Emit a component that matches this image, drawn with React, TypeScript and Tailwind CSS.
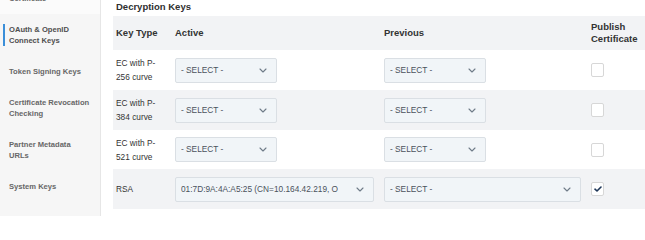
import React from "react";

const font = { fontFamily: '"Liberation Sans", Arial, sans-serif' };

function Chevron() {
  return (
    <svg width="8" height="5" viewBox="0 0 8 5" className="shrink-0">
      <path d="M1 1 L4 4 L7 1" fill="none" stroke="#6f7b88" strokeWidth="1.1" strokeLinecap="round" strokeLinejoin="round" />
    </svg>
  );
}

function Select({ text, full }: { text: string; full?: boolean }) {
  return (
    <div
      className={`${full ? "w-full" : "w-[102px]"} h-[25px] flex items-center pl-[5px] pr-[9px] bg-[#f1f5f8] border border-[#dadfe4] rounded-[2px] text-[8.3px] text-[#4a525c]`}
    >
      <span className="flex-1 min-w-0 whitespace-nowrap overflow-hidden mr-[18px]">{text}</span>
      <Chevron />
    </div>
  );
}

function Checkbox({ checked }: { checked?: boolean }) {
  return (
    <div className="w-[13px] h-[14px] border border-[#d7d7d7] rounded-[2px] bg-white flex items-center justify-center">
      {checked && (
        <svg width="8" height="6" viewBox="0 0 8 6">
          <path d="M1 3.2 L3 5 L7 1" fill="none" stroke="#1d3557" strokeWidth="1.6" strokeLinecap="round" strokeLinejoin="round" />
        </svg>
      )}
    </div>
  );
}

const rows = [
  { type: "EC with P-256 curve", active: "- SELECT -", prev: "- SELECT -", full: false, checked: false },
  { type: "EC with P-384 curve", active: "- SELECT -", prev: "- SELECT -", full: false, checked: false },
  { type: "EC with P-521 curve", active: "- SELECT -", prev: "- SELECT -", full: false, checked: false },
  { type: "RSA", active: "01:7D:9A:4A:A5:25 (CN=10.164.42.219, O=Ping Identity)", prev: "- SELECT -", full: true, checked: true },
];

export default function App() {
  return (
    <div style={font} className="w-[645px] h-[216px] overflow-hidden flex bg-white">
      <aside className="w-[101px] shrink-0 bg-[#f6f6f6] border-r border-[#e6e6e6] flex flex-col text-[7.6px] font-bold text-[#676767] leading-[11px]">
        <div className="h-[14px] bg-[#fbfbfb] flex flex-col justify-end pb-[10px] pl-[9px] overflow-hidden">
          <span className="whitespace-nowrap">Certificate</span>
        </div>
        <div className="py-[10px] pl-[3px] pr-[6px]">
          <div className="border-l-[2px] border-[#3b8fd9] pl-[4px] text-[#4f4f4f]">
            OAuth &amp; OpenID
            <br />
            Connect Keys
          </div>
        </div>
        <div className="py-[10px] pl-[9px] pr-[6px]">Token Signing Keys</div>
        <div className="py-[10px] pl-[9px] pr-[6px]">
          Certificate Revocation
          <br />
          Checking
        </div>
        <div className="py-[10px] pl-[9px] pr-[6px]">
          Partner Metadata
          <br />
          URLs
        </div>
        <div className="py-[10px] pl-[9px] pr-[6px]">System Keys</div>
      </aside>
      <main className="flex-1 pl-[12px] flex flex-col">
        <div className="h-[16px] flex items-center pl-[3px] pb-[3px] text-[9.5px] font-bold text-[#2f2f2f] leading-none">
          Decryption Keys
        </div>
        <div className="grid grid-cols-[62px_209px_207px_1fr] text-[#333]">
          <div className="h-[34px] bg-[#f2f3f5] flex items-center pl-[3px] text-[9.5px] font-bold">Key Type</div>
          <div className="h-[34px] bg-[#f2f3f5] flex items-center text-[9.5px] font-bold">Active</div>
          <div className="h-[34px] bg-[#f2f3f5] flex items-center text-[9.5px] font-bold">Previous</div>
          <div className="h-[34px] bg-[#f2f3f5] flex items-center text-[9.5px] font-bold leading-[12px]">
            Publish
            <br />
            Certificate
          </div>
          {rows.map((r, i) => {
            const bg = i % 2 === 1 ? "bg-[#f2f3f5]" : "bg-white";
            const h = i === 2 ? "h-[39px]" : "h-[40px]";
            return (
              <React.Fragment key={i}>
                <div className={`${bg} ${h} flex items-center pl-[3px] pr-[10px] text-[8.3px] leading-[14px]`}>{r.type}</div>
                <div className={`${bg} ${h} flex items-center pr-[10px] min-w-0`}>
                  <Select text={r.active} full={r.full} />
                </div>
                <div className={`${bg} ${h} flex items-center pr-[10px] min-w-0`}>
                  <Select text={r.prev} full={r.full} />
                </div>
                <div className={`${bg} ${h} flex items-center`}>
                  <Checkbox checked={r.checked} />
                </div>
              </React.Fragment>
            );
          })}
        </div>
      </main>
    </div>
  );
}
